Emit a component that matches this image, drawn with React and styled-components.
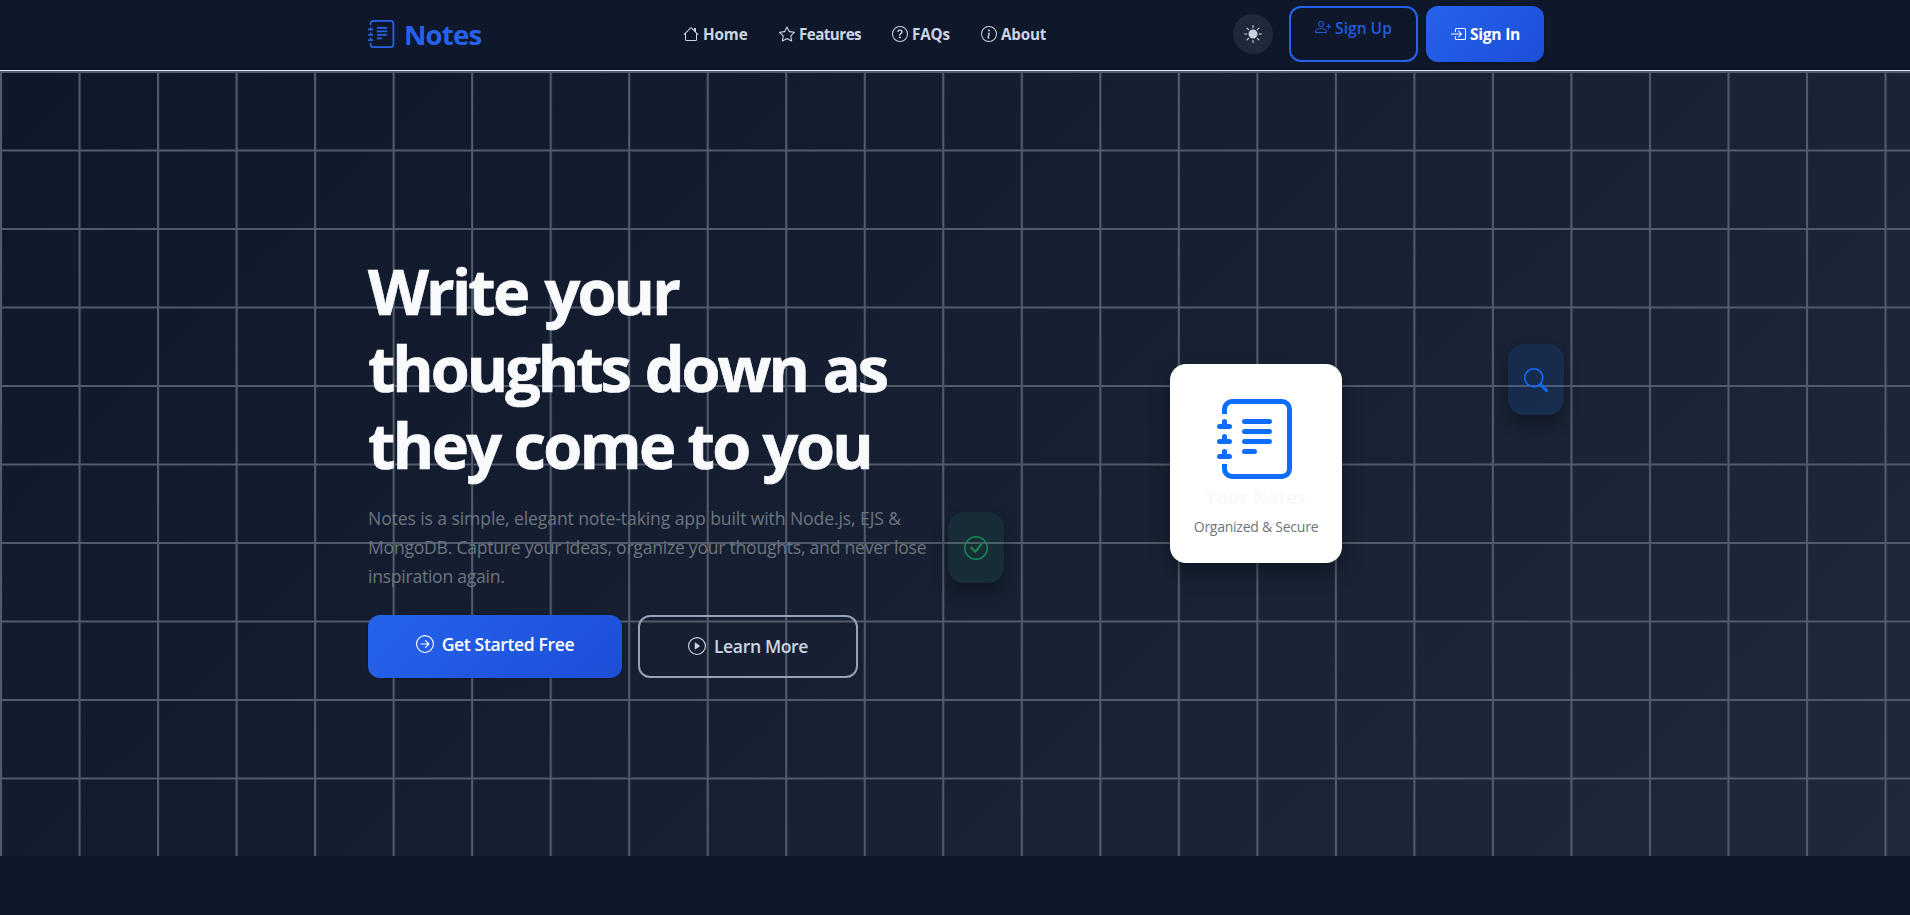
import React from 'react';
import styled, { createGlobalStyle } from 'styled-components';
import {
  BsJournalText, BsHouse, BsStar, BsQuestionCircle, BsInfoCircle, BsSunFill, BsPersonPlus,
  BsBoxArrowInRight, BsArrowRightCircle, BsPlayCircle, BsSearch, BsCheckCircle,
} from 'react-icons/bs';

const Global = createGlobalStyle`
  * { box-sizing: border-box; }
  body {
    margin: 0;
    background: #0f172a;
    font-family: 'Open Sans', 'Noto Sans', sans-serif;
    font-size: 16px;
    line-height: 1.5;
    overflow: hidden;
  }
  svg { display: block; flex: none; }
`;

const Page = styled.div`
  height: 915px;
  overflow: hidden;
`;

const Container = styled.div`
  width: 1176px;
  margin-left: 368px;
  display: flex;
  align-items: center;
`;

const Navbar = styled.nav`
  height: 71px;
  padding-bottom: 2px;
  border-bottom: 1px solid #e2e8f0;
  display: flex;
`;

const Brand = styled.a`
  display: flex;
  align-items: center;
  gap: 8px;
  width: 315px;
  color: #2563eb;
  font-weight: 700;
  font-size: 27.6px;
  letter-spacing: -0.85px;
  span { padding-top: 1px; }
`;

const NavLinks = styled.div`
  display: flex;
  width: 550px;
`;

const NavLink = styled.a`
  display: flex;
  align-items: center;
  gap: 4px;
  width: ${(p) => p.$w}px;
  color: #cbd5e1;
  font-weight: 700;
  font-size: 15.2px;
  white-space: nowrap;
  letter-spacing: ${(p) => p.$ls || 0}px;
`;

const ThemeToggle = styled.button`
  width: 40px;
  height: 40px;
  margin-right: 16px;
  border: 0;
  border-radius: 50%;
  padding: 0;
  background: #1e293b;
  color: #cbd5e1;
  display: flex;
  align-items: center;
  justify-content: center;
`;

const NavButton = styled.a`
  width: ${(p) => p.$w}px;
  height: 56px;
  border-radius: 12px;
  display: flex;
  justify-content: center;
  gap: 4px;
  font-weight: 600;
  font-size: 15.6px;
  line-height: 22px;
  white-space: nowrap;
  svg { margin-top: 3px; }
`;

const SignUp = styled(NavButton)`
  margin-right: 8px;
  padding-top: 9px;
  border: 2px solid #2563eb;
  color: #2563eb;
  svg { margin-top: 2px; }
  & > * { opacity: 0.9; }
`;

const SignIn = styled(NavButton)`
  padding-top: 17px;
  background: linear-gradient(135deg, #2563eb, #1d4ed8);
  color: #fff;
  font-weight: 700;
  letter-spacing: -0.25px;
  box-shadow: 0 1px 2px rgba(0, 0, 0, 0.2);
`;

const Hero = styled.section`
  position: relative;
  height: 785px;
  background: linear-gradient(135deg, #0f172a 0%, #1e293b 100%);
`;

const GridLines = styled.svg`
  position: absolute;
  inset: 0;
  width: 100%;
  height: 100%;
`;

const HeroContent = styled(Container)`
  position: relative;
  height: 100%;
`;

const Copy = styled.div`
  width: 588px;
  height: 785px;
  padding-top: 182px;
`;

const Title = styled.h1`
  margin: 0 0 21px;
  color: #f8fafc;
  font-weight: 700;
  font-size: 63px;
  line-height: 76.8px;
  -webkit-text-stroke: 0.7px #f8fafc;
`;

const TitleLine = styled.span`
  display: block;
  white-space: nowrap;
  letter-spacing: ${(p) => p.$ls}px;
  word-spacing: ${(p) => p.$ws || 0}px;
`;

const Lead = styled.p`
  margin: 0 0 23.6px;
  color: #6c757d;
  font-weight: 400;
  font-size: 17.6px;
  line-height: 29px;
`;

const LeadLine = styled.span`
  display: block;
  white-space: nowrap;
  letter-spacing: ${(p) => p.$ls}px;
`;

const Actions = styled.div`
  display: flex;
  gap: 16px;
`;

const Action = styled.a`
  width: ${(p) => p.$w}px;
  height: 63px;
  border-radius: 12px;
  display: flex;
  justify-content: center;
  gap: 8px;
  font-weight: 600;
  font-size: 17.6px;
  line-height: 26px;
  letter-spacing: -0.38px;
  padding-top: 16px;
  white-space: nowrap;
  svg { margin-top: 4px; }
`;

const Primary = styled(Action)`
  background: linear-gradient(135deg, #2563eb, #1d4ed8);
  color: #fff;
  box-shadow: 0 1px 2px rgba(0, 0, 0, 0.2);
`;

const Outline = styled(Action)`
  border: 2px solid #94a3b8;
  color: #cbd5e1;
`;

const Visual = styled.div`
  position: relative;
  width: 588px;
  height: 785px;
  display: flex;
  justify-content: center;
  padding: 293px 0 0 12px;
`;

const NoteCard = styled.div`
  width: 172px;
  height: 199px;
  border-radius: 16px;
  background: #fff;
  box-shadow: 0 10px 20px rgba(0, 0, 0, 0.35);
  display: flex;
  flex-direction: column;
  align-items: center;
  padding: 35px 0 0 1px;
  color: #0d6efd;
`;

const CardTitle = styled.div`
  margin: 6px 2px 0 0;
  color: #f8fafc;
  font-weight: 700;
  font-size: 18px;
  line-height: 24px;
`;

const CardText = styled.div`
  margin: 7px 1px 0 0;
  color: #6c757d;
  font-size: 14px;
  line-height: 21px;
  letter-spacing: -0.25px;
  white-space: nowrap;
`;

const Floating = styled.div`
  position: absolute;
  left: ${(p) => p.$x}px;
  top: ${(p) => p.$y}px;
  width: 56px;
  height: 71px;
  border-radius: 16px;
  background: ${(p) => p.$bg};
  color: ${(p) => p.$fg};
  box-shadow: 0 10px 16px rgba(0, 0, 0, 0.3);
  display: flex;
  justify-content: center;
  padding-top: 24px;
`;

export default function App() {
  return (
    <Page>
      <Global />
      <Navbar>
        <Container>
          <Brand><BsJournalText size={28} /><span>Notes</span></Brand>
          <NavLinks>
            <NavLink $w={96} $ls={-0.1}><BsHouse size={16} />Home</NavLink>
            <NavLink $w={113} $ls={-0.55}><BsStar size={16} />Features</NavLink>
            <NavLink $w={89} $ls={-0.1}><BsQuestionCircle size={16} />FAQs</NavLink>
            <NavLink $w={80} $ls={-0.15}><BsInfoCircle size={16} />About</NavLink>
          </NavLinks>
          <ThemeToggle><BsSunFill size={18} /></ThemeToggle>
          <SignUp $w={129}><BsPersonPlus size={16} /><span>Sign Up</span></SignUp>
          <SignIn $w={118}><BsBoxArrowInRight size={16} /><span>Sign In</span></SignIn>
        </Container>
      </Navbar>
      <Hero>
        <GridLines>
          <defs>
            <pattern id="grid" width="78.52" height="78.5" patternUnits="userSpaceOnUse">
              <path d="M78.52 0H0V78.5" fill="none" stroke="#525b6a" strokeWidth="4.2" />
            </pattern>
          </defs>
          <rect width="100%" height="100%" fill="url(#grid)" />
        </GridLines>
        <HeroContent>
          <Copy>
            <Title>
              <TitleLine $ls={-2.8} $ws={3.5}>Write your</TitleLine>
              <TitleLine $ls={-3} $ws={2.5}>thoughts down as</TitleLine>
              <TitleLine $ls={-2.55}>they come to you</TitleLine>
            </Title>
            <Lead>
              <LeadLine $ls={-0.11}>Notes is a simple, elegant note-taking app built with Node.js, EJS &amp;</LeadLine>
              <LeadLine $ls={-0.25}>MongoDB. Capture your ideas, organize your thoughts, and never lose</LeadLine>
              <LeadLine $ls={-0.27}>inspiration again.</LeadLine>
            </Lead>
            <Actions>
              <Primary $w={254}><BsArrowRightCircle size={18} />Get Started Free</Primary>
              <Outline $w={220}><BsPlayCircle size={18} />Learn More</Outline>
            </Actions>
          </Copy>
          <Visual>
            <NoteCard>
              <BsJournalText size={80} />
              <CardTitle>Your Notes</CardTitle>
              <CardText>Organized &amp; Secure</CardText>
            </NoteCard>
            <Floating $x={552} $y={273} $bg="rgba(13, 110, 253, 0.12)" $fg="#0d6efd"><BsSearch size={24} /></Floating>
            <Floating $x={-8} $y={441} $bg="rgba(25, 135, 84, 0.12)" $fg="#198754"><BsCheckCircle size={24} /></Floating>
          </Visual>
        </HeroContent>
      </Hero>
    </Page>
  );
}
